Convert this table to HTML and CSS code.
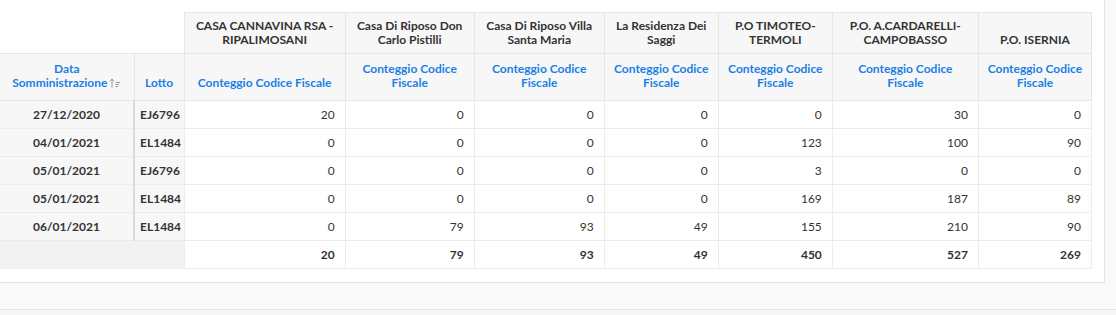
FILE: index.html
```html
<!DOCTYPE html>
<html>
<head>
<meta charset="utf-8">
<link rel="stylesheet" href="styles.css">
</head>
<body>
<div class="page">
  <div class="card">
    <table class="pivot">
      <colgroup>
        <col class="c-date"><col class="c-lotto">
        <col class="c1"><col class="c2"><col class="c3"><col class="c4"><col class="c5"><col class="c6"><col class="c7">
      </colgroup>
      <thead>
        <tr class="hr1">
          <th class="blank" colspan="2"></th>
          <th>CASA CANNAVINA RSA -<br>RIPALIMOSANI</th>
          <th>Casa Di Riposo Don<br>Carlo Pistilli</th>
          <th>Casa Di Riposo Villa<br>Santa Maria</th>
          <th>La Residenza Dei<br>Saggi</th>
          <th>P.O TIMOTEO-<br>TERMOLI</th>
          <th>P.O. A.CARDARELLI-<br>CAMPOBASSO</th>
          <th>P.O. ISERNIA</th>
        </tr>
        <tr class="hr2">
          <th class="lnk first">Data<br>Somministrazione<svg class="sort" width="12" height="10" viewBox="0 0 12 10"><path d="M3 9.5V1M1 3.2L3 1l2 2.2" fill="none" stroke="#8a9bb0" stroke-width="1"/><path d="M6.5 4.5h4.5M6.5 6.5h3.5M6.5 8.5h2.5" stroke="#9a9a9a" stroke-width="1"/></svg></th>
          <th class="lnk lotto">Lotto</th>
          <th class="lnk">Conteggio Codice Fiscale</th>
          <th class="lnk">Conteggio Codice<br>Fiscale</th>
          <th class="lnk">Conteggio Codice<br>Fiscale</th>
          <th class="lnk">Conteggio Codice<br>Fiscale</th>
          <th class="lnk">Conteggio Codice<br>Fiscale</th>
          <th class="lnk">Conteggio Codice<br>Fiscale</th>
          <th class="lnk">Conteggio Codice<br>Fiscale</th>
        </tr>
      </thead>
      <tbody>
        <tr><td class="rh date">27/12/2020</td><td class="rh lot">EJ6796</td><td>20</td><td>0</td><td>0</td><td>0</td><td>0</td><td>30</td><td>0</td></tr>
        <tr><td class="rh date">04/01/2021</td><td class="rh lot">EL1484</td><td>0</td><td>0</td><td>0</td><td>0</td><td>123</td><td>100</td><td>90</td></tr>
        <tr><td class="rh date">05/01/2021</td><td class="rh lot">EJ6796</td><td>0</td><td>0</td><td>0</td><td>0</td><td>3</td><td>0</td><td>0</td></tr>
        <tr><td class="rh date">05/01/2021</td><td class="rh lot">EL1484</td><td>0</td><td>0</td><td>0</td><td>0</td><td>169</td><td>187</td><td>89</td></tr>
        <tr><td class="rh date">06/01/2021</td><td class="rh lot">EL1484</td><td>0</td><td>79</td><td>93</td><td>49</td><td>155</td><td>210</td><td>90</td></tr>
        <tr class="total"><td class="tot-blank" colspan="2"></td><td>20</td><td>79</td><td>93</td><td>49</td><td>450</td><td>527</td><td>269</td></tr>
      </tbody>
    </table>
  </div>
  <div class="footer"></div>
</div>
</body>
</html>
```

FILE: styles.css
```css
html, body {
  margin: 0;
  padding: 0;
}
body {
  background: #fafafa;
  font-family: "Lato", "Noto Sans", sans-serif;
  font-size: 12px;
  color: #333;
}
.page {
  height: 315px;
  overflow: hidden;
}
.card {
  width: 1105px;
  box-sizing: border-box;
  background: #fff;
  border-right: 1px solid #e2e2e2;
  border-bottom: 1px solid #e2e2e2;
  padding: 12px 13px 13px 0;
}
.pivot {
  border-collapse: collapse;
  table-layout: fixed;
  width: 1092px;
}
.c-date { width: 134px; }
.c-lotto { width: 50px; }
.c1 { width: 161px; }
.c2 { width: 129px; }
.c3 { width: 130px; }
.c4 { width: 114px; }
.c5 { width: 114px; }
.c6 { width: 146px; }
.c7 { width: 113px; }

.pivot th {
  background: #f7f7f7;
  border: 1px solid #e6e6e6;
  font-weight: 700;
  line-height: 14px;
  text-align: center;
  vertical-align: bottom;
  padding: 0 4px 10px;
  color: #333;
}
.pivot .hr1 th { height: 41px; padding-bottom: 6px; box-sizing: border-box; }
.pivot .hr1 th.blank {
  background: #fff;
  border: none;
  border-bottom: 1px solid #e6e6e6;
}
.pivot .hr2 th { height: 47px; box-sizing: border-box; }
.pivot .hr2 th.first { border-left: none; }
.pivot th.lnk { color: #1a7fe6; }
.sort { margin-left: 2px; vertical-align: -1px; }

.pivot td {
  height: 28px;
  box-sizing: border-box;
  border: 1px solid #ececec;
  text-align: right;
  padding: 0 10px;
  vertical-align: middle;
}
.pivot td.rh {
  background: #f7f7f7;
  font-weight: 700;
  border-color: #ececec;
}
.pivot td.date {
  text-align: center;
  border-left: none;
  border-right: 2px solid #dadada;
}
.pivot td.lot {
  text-align: left;
  padding: 0 5px;
}
.pivot tr.total td { font-weight: 700; }
.pivot td.tot-blank {
  background: #f2f2f2;
  border-left: none;
  border-bottom: none;
}
.footer {
  margin-top: 26px;
  border-top: 1px solid #e6e6e6;
  height: 10px;
  background: #f7f7f7;
}
```
